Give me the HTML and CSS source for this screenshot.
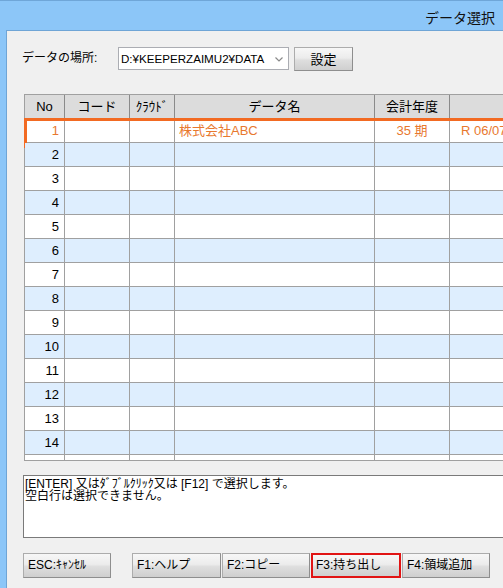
FILE: index.html
```html
<!DOCTYPE html>
<html lang="ja">
<head>
<meta charset="utf-8">
<title>データ選択</title>
<link rel="stylesheet" href="styles.css">
</head>
<body>
<div class="window">
  <div class="titlebar"><span class="title">データ選択</span></div>
  <div class="client">
    <div class="loc">
      <span class="loc-label">データの場所:</span>
      <div class="combo">
        <span class="combo-text">D:¥KEEPERZAIMU2¥DATA</span>
        <svg class="chev" width="8" height="5" viewBox="0 0 8 5"><path d="M0.5 0.5 L4 4 L7.5 0.5" fill="none" stroke="#8a8a8a" stroke-width="1.2"/></svg>
      </div>
      <button class="btn btn-set">設定</button>
    </div>

    <div class="grid">
      <div class="row head">
        <div class="cell w-no">No</div>
        <div class="cell w-code">コード</div>
        <div class="cell w-cloud">ｸﾗｳﾄﾞ</div>
        <div class="cell w-name">データ名</div>
        <div class="cell w-year">会計年度</div>
        <div class="cell w-date"></div>
      </div>
      <div class="row sel">
        <div class="cell w-no">1</div><div class="cell w-code"></div><div class="cell w-cloud"></div>
        <div class="cell w-name">株式会社ABC</div><div class="cell w-year">35 期</div><div class="cell w-date">R 06/07/01</div>
      </div>
      <div class="row alt"><div class="cell w-no">2</div><div class="cell w-code"></div><div class="cell w-cloud"></div><div class="cell w-name"></div><div class="cell w-year"></div><div class="cell w-date"></div></div>
      <div class="row"><div class="cell w-no">3</div><div class="cell w-code"></div><div class="cell w-cloud"></div><div class="cell w-name"></div><div class="cell w-year"></div><div class="cell w-date"></div></div>
      <div class="row alt"><div class="cell w-no">4</div><div class="cell w-code"></div><div class="cell w-cloud"></div><div class="cell w-name"></div><div class="cell w-year"></div><div class="cell w-date"></div></div>
      <div class="row"><div class="cell w-no">5</div><div class="cell w-code"></div><div class="cell w-cloud"></div><div class="cell w-name"></div><div class="cell w-year"></div><div class="cell w-date"></div></div>
      <div class="row alt"><div class="cell w-no">6</div><div class="cell w-code"></div><div class="cell w-cloud"></div><div class="cell w-name"></div><div class="cell w-year"></div><div class="cell w-date"></div></div>
      <div class="row"><div class="cell w-no">7</div><div class="cell w-code"></div><div class="cell w-cloud"></div><div class="cell w-name"></div><div class="cell w-year"></div><div class="cell w-date"></div></div>
      <div class="row alt"><div class="cell w-no">8</div><div class="cell w-code"></div><div class="cell w-cloud"></div><div class="cell w-name"></div><div class="cell w-year"></div><div class="cell w-date"></div></div>
      <div class="row"><div class="cell w-no">9</div><div class="cell w-code"></div><div class="cell w-cloud"></div><div class="cell w-name"></div><div class="cell w-year"></div><div class="cell w-date"></div></div>
      <div class="row alt"><div class="cell w-no">10</div><div class="cell w-code"></div><div class="cell w-cloud"></div><div class="cell w-name"></div><div class="cell w-year"></div><div class="cell w-date"></div></div>
      <div class="row"><div class="cell w-no">11</div><div class="cell w-code"></div><div class="cell w-cloud"></div><div class="cell w-name"></div><div class="cell w-year"></div><div class="cell w-date"></div></div>
      <div class="row alt"><div class="cell w-no">12</div><div class="cell w-code"></div><div class="cell w-cloud"></div><div class="cell w-name"></div><div class="cell w-year"></div><div class="cell w-date"></div></div>
      <div class="row"><div class="cell w-no">13</div><div class="cell w-code"></div><div class="cell w-cloud"></div><div class="cell w-name"></div><div class="cell w-year"></div><div class="cell w-date"></div></div>
      <div class="row alt"><div class="cell w-no">14</div><div class="cell w-code"></div><div class="cell w-cloud"></div><div class="cell w-name"></div><div class="cell w-year"></div><div class="cell w-date"></div></div>
      <div class="row part"><div class="cell w-no"></div><div class="cell w-code"></div><div class="cell w-cloud"></div><div class="cell w-name"></div><div class="cell w-year"></div><div class="cell w-date"></div></div>
    </div>

    <div class="msg">
      <div>[ENTER] 又はﾀﾞﾌﾞﾙｸﾘｯｸ又は [F12] で選択します。</div>
      <div>空白行は選択できません。</div>
    </div>

    <div class="btns">
      <button class="btn btn-esc">ESC:ｷｬﾝｾﾙ</button>
      <button class="btn btn-f1">F1:ヘルプ</button>
      <button class="btn">F2:コピー</button>
      <button class="btn btn-f3">F3:持ち出し</button>
      <button class="btn">F4:領域追加</button>
    </div>
  </div>
</div>
</body>
</html>
```

FILE: styles.css
```css
* { box-sizing: border-box; }
html, body { margin: 0; padding: 0; }
body {
  width: 503px;
  height: 588px;
  overflow: hidden;
  font-family: "Liberation Sans", "Noto Sans CJK JP", sans-serif;
  font-size: 12px;
  color: #000;
  background: #F0F0F0;
}
.window {
  width: 503px;
  height: 588px;
  background: #8CC6F8;
  border-top: 1px solid #6FA6D8;
  padding-left: 6px;
  display: flex;
  flex-direction: column;
}
.titlebar {
  height: 29px;
  flex: none;
  display: flex;
  align-items: center;
  justify-content: flex-end;
  padding: 2px 8px 0 0;
}
.title {
  font-family: "Noto Sans CJK JP", sans-serif;
  font-size: 14px;
  line-height: 16px;
  color: #111;
}
.client {
  flex: 1;
  background: #F0F0F0;
  border-left: 1px solid #6FA5D6;
  border-top: 1px solid #6FA5D6;
  overflow: hidden;
}

/* location row */
.loc {
  display: flex;
  align-items: flex-start;
  margin-top: 16px;
  height: 24px;
  padding-left: 15px;
}
.loc-label {
  width: 96px;
  line-height: 23px;
  font-size: 12px;
}
.combo {
  width: 171px;
  height: 23px;
  border: 1px solid #ABADB3;
  background: #fff;
  display: flex;
  align-items: center;
  padding: 0 5px 0 2px;
}
.combo-text {
  flex: 1;
  font-size: 11.6px;
  line-height: 21px;
  white-space: nowrap;
}
.chev { display: block; margin-top: 2px; }

.btn {
  font-family: "Liberation Sans", "Noto Sans CJK JP", sans-serif;
  font-size: 12px;
  color: #000;
  height: 25px;
  width: 88px;
  margin: 0;
  padding: 0 0 0 4px;
  text-align: left;
  line-height: 21px;
  white-space: nowrap;
  border: 1px solid #ACACAC;
  border-right-color: #8E8E8E;
  border-bottom-color: #8E8E8E;
  background: linear-gradient(to bottom, #F7F7F7 0%, #ECECEC 45%, #DEDEDE 55%, #CFCFCF 100%);
}
.btn-set {
  width: 59px;
  height: 24px;
  margin-left: 5px;
  padding: 0;
  text-align: center;
  font-size: 13px;
}

/* grid */
.grid {
  margin: 23px 0 0 17px;
  width: 600px;
  border: 1px solid #A0A0A0;
  border-right: none;
  background: #fff;
}
.row {
  display: flex;
  height: 24px;
  position: relative;
}
.cell {
  flex: none;
  height: 24px;
  border-right: 1px solid #A0A0A0;
  border-bottom: 1px solid #A0A0A0;
  line-height: 23px;
  font-size: 13px;
  overflow: hidden;
  white-space: nowrap;
}
.w-no { width: 40px; text-align: right; padding-right: 5px; }
.w-code { width: 65px; }
.w-cloud { width: 45px; }
.w-name { width: 200px; padding-left: 4px; }
.w-year { width: 75px; text-align: center; }
.w-date { width: 175px; padding-left: 11px; }

.head .cell {
  background: #DCDCDC;
  text-align: center;
  padding: 0;
  border-right-color: #8A8A8A;
  border-bottom-color: #8A8A8A;
}
.row.alt .cell { background: #DEEEFE; }
.row.sel { color: #E8782E; }
.row.sel::after {
  content: "";
  position: absolute;
  top: -1px;
  left: -1px;
  right: 0;
  height: 24px;
  border: 3px solid #F26A22;
}
.row.part { height: 5px; }
.row.part .cell { height: 5px; border-bottom: none; }

/* message */
.msg {
  margin: 14px 0 0 16px;
  width: 600px;
  height: 63px;
  border: 1px solid #7A7A7A;
  background: #fff;
  font-size: 12px;
  line-height: 12px;
  padding: 2px 0 0 1px;
  white-space: nowrap;
}

/* bottom buttons */
.btns {
  display: flex;
  gap: 1px;
  margin: 15px 0 0 16px;
}
.btn-esc { margin-right: 20px; }
.btn-f1 { width: 89px; }
.btn-f3 {
  width: 90px;
  border: 2px solid #E11414;
  padding-left: 3px;
}
```
